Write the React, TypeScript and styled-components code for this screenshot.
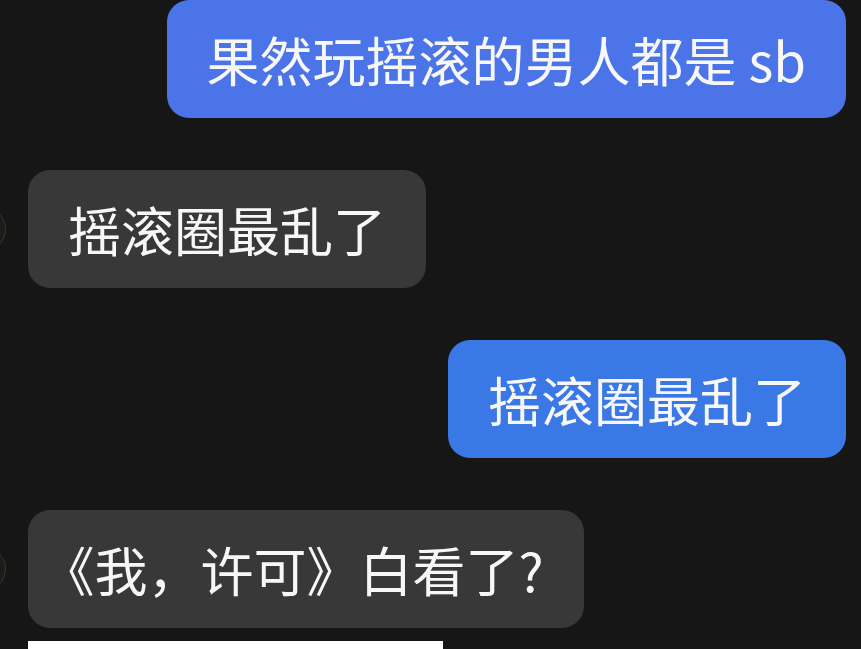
import React from 'react';
import styled, { createGlobalStyle } from 'styled-components';

const GlobalStyle = createGlobalStyle`
  html, body {
    margin: 0;
    padding: 0;
    background: #161616;
    overflow: hidden;
  }
`;

const Thread = styled.div`
  display: flex;
  flex-direction: column;
  gap: 52px;
  height: 649px;
  overflow: hidden;
  font-family: 'Noto Sans CJK SC', 'Noto Sans', sans-serif;
`;

const Row = styled.div<{ mine?: boolean }>`
  display: flex;
  align-items: center;
  justify-content: ${({ mine }) => (mine ? 'flex-end' : 'flex-start')};
  padding-right: ${({ mine }) => (mine ? '15px' : '0')};
  gap: 22px;
`;

const Avatar = styled.div`
  width: 44px;
  height: 44px;
  flex: none;
  margin-left: -38px;
  border-radius: 50%;
  background: #1c1c1a;
  box-shadow: inset -1px 0 0 #3b3722;
`;

const Bubble = styled.div<{ bg: string }>`
  background: ${({ bg }) => bg};
  color: #f7f7f7;
  font-size: 53px;
  line-height: 62px;
  padding: 28px 40px;
  border-radius: 22px;
  white-space: nowrap;
`;

// half-width opening bracket, like the phone's font draws it
const HalfPunct = styled.span`
  font-feature-settings: 'halt';
`;

const Pending = styled.div`
  display: flex;
  flex-direction: column;
  gap: 13px;
`;

const WhiteBar = styled.div`
  width: 415px;
  height: 24px;
  margin-left: 28px;
  background: #ffffff;
`;

const App: React.FC = () => {
  return (
    <>
      <GlobalStyle />
      <Thread>
        <Row mine>
          <Bubble bg="#4a74e8">果然玩摇滚的男人都是 sb</Bubble>
        </Row>
        <Row>
          <Avatar />
          <Bubble bg="#383838">摇滚圈最乱了</Bubble>
        </Row>
        <Row mine>
          <Bubble bg="#3a78e6">摇滚圈最乱了</Bubble>
        </Row>
        <Pending>
          <Row>
            <Avatar />
            <Bubble bg="#383838">
              <HalfPunct>《</HalfPunct>我，许可》白看了?
            </Bubble>
          </Row>
          <WhiteBar />
        </Pending>
      </Thread>
    </>
  );
};

export default App;
